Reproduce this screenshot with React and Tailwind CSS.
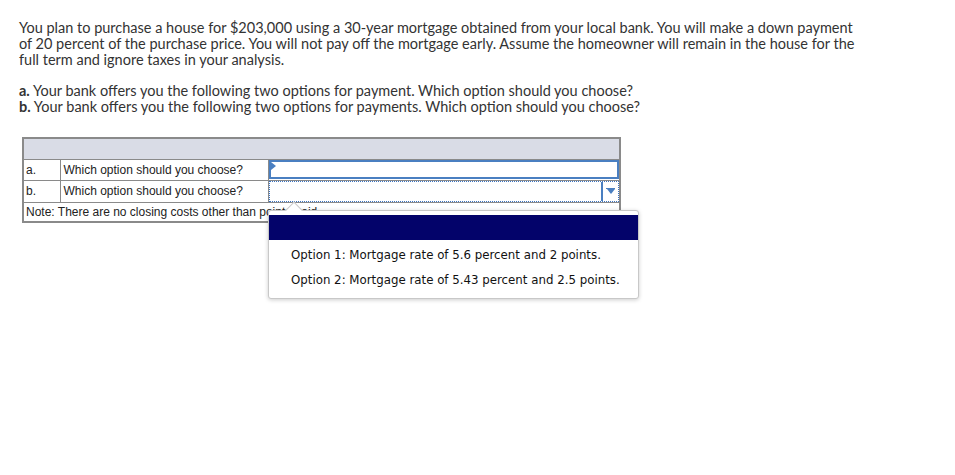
import React from "react";

export default function App() {
  return (
    <div className="w-[955px] h-[475px] bg-white relative font-['Lato',sans-serif] text-[#333]">
      <div className="pl-[19px] pt-[20px] text-[14.5px] leading-[16px] whitespace-nowrap">
        <p>
          You plan to purchase a house for $203,000 using a 30-year mortgage obtained from your local bank. You will make a down payment
          <br />
          of 20 percent of the purchase price. You will not pay off the mortgage early. Assume the homeowner will remain in the house for the
          <br />
          full term and ignore taxes in your analysis.
        </p>
        <p className="mt-[15px]">
          <b className="font-bold">a.</b> Your bank offers you the following two options for payment. Which option should you choose?
        </p>
        <p>
          <b className="font-bold">b.</b> Your bank offers you the following two options for payments. Which option should you choose?
        </p>
      </div>

      <div className="relative ml-[22px] mt-[22px] w-[599px] font-['Liberation_Sans',Arial,sans-serif] text-[12px] text-[#222]">
        <table className="w-full border-collapse border-2 border-[#8a8a8a]">
          <tbody>
            <tr className="h-[21px] bg-[#d9dce6]">
              <td colSpan={3} className="border border-[#8a8a8a]" />
            </tr>
            <tr className="h-[21px]">
              <td className="w-[37px] border border-[#8a8a8a] pl-[2px]">a.</td>
              <td className="w-[208px] border border-[#8a8a8a] pl-[3px]">Which option should you choose?</td>
              <td className="border border-[#8a8a8a] p-0">
                <div className="relative h-[19px] border-2 border-[#4a7fc1]">
                  <span className="absolute left-0 top-0 w-0 h-0 border-t-[4px] border-b-[4px] border-l-[5px] border-t-transparent border-b-transparent border-l-[#4a7fc1]" />
                </div>
              </td>
            </tr>
            <tr className="h-[21px]">
              <td className="border border-[#8a8a8a] pl-[2px]">b.</td>
              <td className="border border-[#8a8a8a] pl-[3px]">Which option should you choose?</td>
              <td className="border border-[#8a8a8a] p-0">
                <div className="flex h-[21px] border border-dotted border-[#3b73c0]">
                  <div className="flex-1" />
                  <div className="w-[17px] border-l-2 border-[#4a7fc1] flex flex-col items-center justify-center">
                    <span className="w-[9px] h-[1px] bg-[#4a7fc1]" />
                    <span className="w-0 h-0 border-l-[4px] border-r-[4px] border-t-[5px] border-l-transparent border-r-transparent border-t-[#4a7fc1]" />
                  </div>
                </div>
              </td>
            </tr>
            <tr className="h-[20px]">
              <td colSpan={3} className="border border-[#8a8a8a] pl-[2px]">
                Note: There are no closing costs other than points paid.
              </td>
            </tr>
          </tbody>
        </table>

        <div className="absolute left-[246px] top-[73px] w-[371px] bg-white border border-[#c8c8c8] rounded-[3px] shadow-[0_1px_4px_rgba(0,0,0,0.2)] font-['DejaVu_Sans',Verdana,sans-serif] text-[11.8px] text-[#111]">
          <div className="absolute -top-[7px] left-[19px] w-[12px] h-[12px] bg-white border-l border-t border-[#c8c8c8] rotate-45" />
          <div className="relative mt-[4px] h-[25px] bg-[#03036a]" />
          <div className="pl-[22px] pt-[3px] pb-[5px]">
            <div className="h-[25px] leading-[25px]">Option 1: Mortgage rate of 5.6 percent and 2 points.</div>
            <div className="h-[25px] leading-[25px]">Option 2: Mortgage rate of 5.43 percent and 2.5 points.</div>
          </div>
        </div>
      </div>
    </div>
  );
}
